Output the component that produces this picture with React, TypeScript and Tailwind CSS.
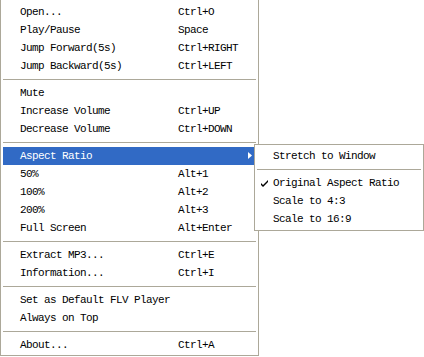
import React from 'react';

type Item = { label: string; shortcut?: string; sub?: boolean; active?: boolean } | 'sep';

const items: Item[] = [
  { label: 'Open...', shortcut: 'Ctrl+O' },
  { label: 'Play/Pause', shortcut: 'Space' },
  { label: 'Jump Forward(5s)', shortcut: 'Ctrl+RIGHT' },
  { label: 'Jump Backward(5s)', shortcut: 'Ctrl+LEFT' },
  'sep',
  { label: 'Mute' },
  { label: 'Increase Volume', shortcut: 'Ctrl+UP' },
  { label: 'Decrease Volume', shortcut: 'Ctrl+DOWN' },
  'sep',
  { label: 'Aspect Ratio', sub: true, active: true },
  { label: '50%', shortcut: 'Alt+1' },
  { label: '100%', shortcut: 'Alt+2' },
  { label: '200%', shortcut: 'Alt+3' },
  { label: 'Full Screen', shortcut: 'Alt+Enter' },
  'sep',
  { label: 'Extract MP3...', shortcut: 'Ctrl+E' },
  { label: 'Information...', shortcut: 'Ctrl+I' },
  'sep',
  { label: 'Set as Default FLV Player' },
  { label: 'Always on Top' },
  'sep',
  { label: 'About...', shortcut: 'Ctrl+A' },
];

const subItems: ({ label: string; checked?: boolean } | 'sep')[] = [
  { label: 'Stretch to Window' },
  'sep',
  { label: 'Original Aspect Ratio', checked: true },
  { label: 'Scale to 4:3' },
  { label: 'Scale to 16:9' },
];

const Separator = () => (
  <div className="h-[9px] flex items-center">
    <div className="h-px w-full bg-[#aca899]" />
  </div>
);

const App: React.FC = () => {
  return (
    <div
      className="relative w-[424px] h-[357px] bg-white text-black overflow-hidden text-[11px] tracking-[-0.6px]"
      style={{ fontFamily: '"Liberation Mono", "DejaVu Sans Mono", monospace' }}
    >
      {/* Main menu */}
      <div className="w-[259px] bg-white border-l border-r border-b border-[#aca899] pt-[3px] pb-[1px] px-[2px]">
        {items.map((it, i) =>
          it === 'sep' ? (
            <Separator key={i} />
          ) : (
            <div
              key={i}
              className={`relative h-[18px] flex items-center pl-[17px] ${it.active ? 'bg-[#316ac5] text-white' : ''}`}
            >
              <span className="w-[158px] whitespace-pre">{it.label}</span>
              <span className="whitespace-pre">{it.shortcut}</span>
              {it.sub && (
                <svg className="absolute right-[4px] top-[5px]" width="4" height="7" viewBox="0 0 4 7">
                  <path d="M0 0 L4 3.5 L0 7 Z" fill="white" />
                </svg>
              )}
            </div>
          )
        )}
      </div>

      {/* Aspect Ratio submenu */}
      <div className="absolute left-[254px] top-[144px] w-[170px] bg-white border border-[#aca899] p-[2px]">
        {subItems.map((it, i) =>
          it === 'sep' ? (
            <Separator key={i} />
          ) : (
            <div key={i} className="relative h-[18px] flex items-center pl-[16px]">
              {it.checked && (
                <svg className="absolute left-[4px] top-[6px]" width="7" height="7" viewBox="0 0 7 7">
                  <path d="M0 3 L0 5 L2 7 L7 2 L7 0 L2 5 Z" fill="black" />
                </svg>
              )}
              <span className="whitespace-pre">{it.label}</span>
            </div>
          )
        )}
      </div>
    </div>
  );
};

export default App;
